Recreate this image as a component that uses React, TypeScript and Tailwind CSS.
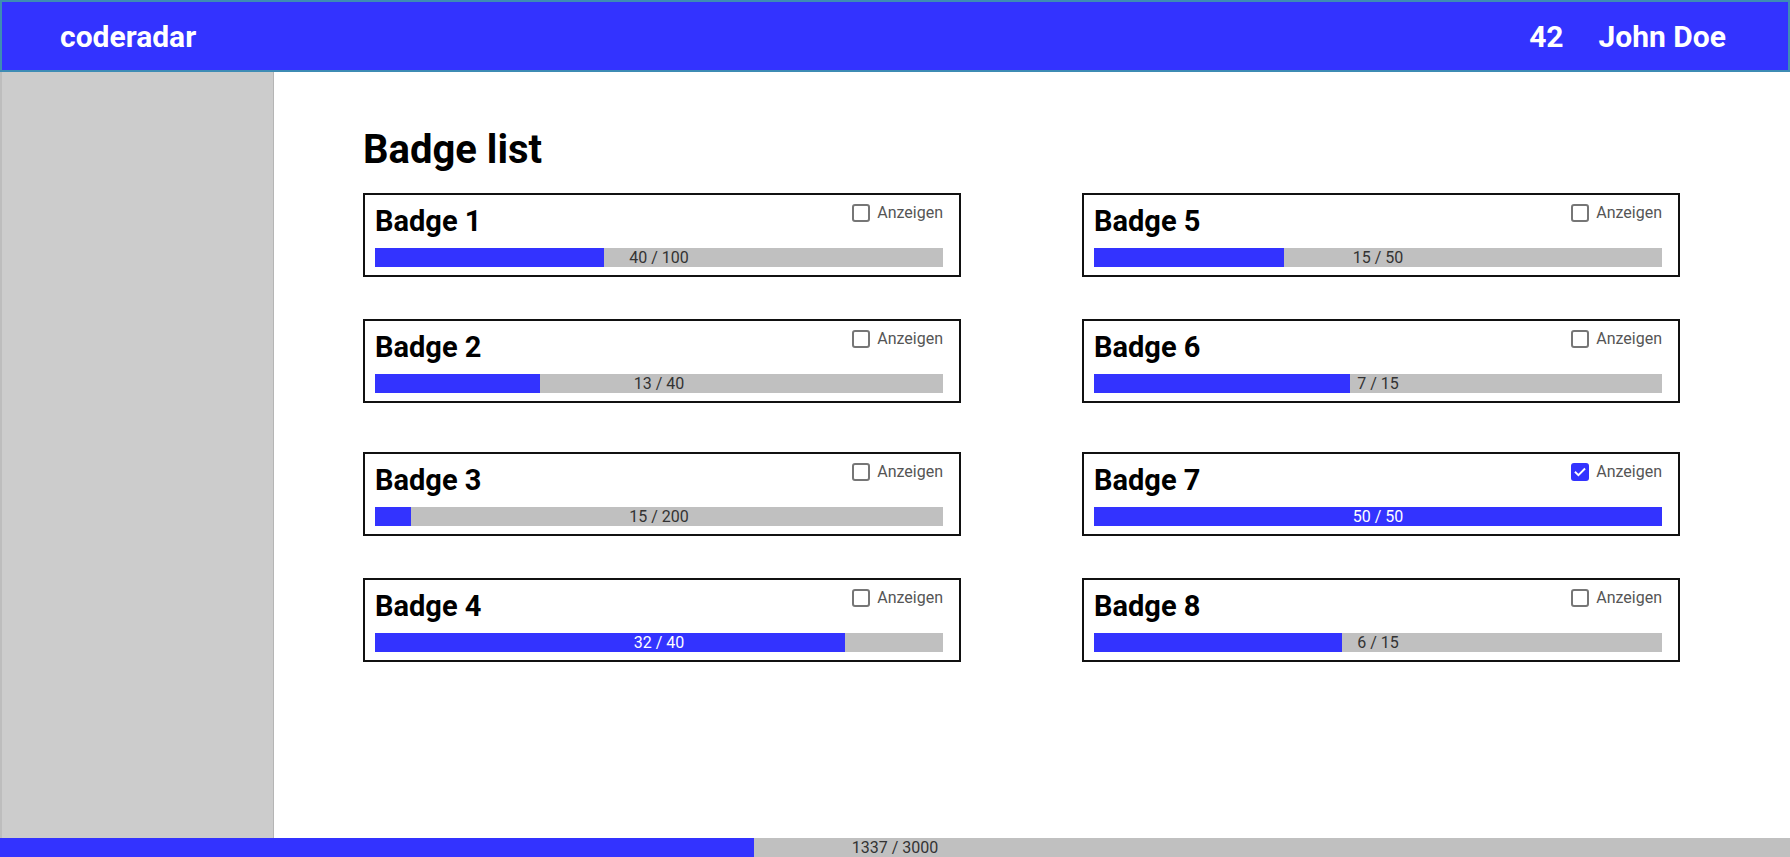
import React from "react";

type Badge = {
  name: string;
  current: number;
  total: number;
  fill: number; // share of the bar drawn in blue
  shown: boolean;
  extraTop?: boolean;
};

const left: Badge[] = [
  { name: "Badge 1", current: 40, total: 100, fill: 40.4, shown: false },
  { name: "Badge 2", current: 13, total: 40, fill: 29, shown: false },
  { name: "Badge 3", current: 15, total: 200, fill: 6.3, shown: false, extraTop: true },
  { name: "Badge 4", current: 32, total: 40, fill: 82.7, shown: false },
];

const right: Badge[] = [
  { name: "Badge 5", current: 15, total: 50, fill: 33.4, shown: false },
  { name: "Badge 6", current: 7, total: 15, fill: 45, shown: false },
  { name: "Badge 7", current: 50, total: 50, fill: 100, shown: true, extraTop: true },
  { name: "Badge 8", current: 6, total: 15, fill: 43.6, shown: false },
];

function Checkbox({ checked }: { checked: boolean }) {
  if (checked) {
    return (
      <span className="w-[18px] h-[18px] rounded-[3px] bg-[#3333ff] flex items-center justify-center">
        <svg width="14" height="14" viewBox="0 0 16 16" fill="none">
          <path d="M3 8.5l3.2 3.2L13 4.8" stroke="white" strokeWidth="2.2" strokeLinecap="square" />
        </svg>
      </span>
    );
  }
  return <span className="w-[18px] h-[18px] rounded-[3px] border-2 border-[#767676] bg-white" />;
}

function ProgressBar({ fill, label, light }: { fill: number; label: string; light: boolean }) {
  return (
    <div className="relative h-[19px] bg-[#c0c0c0]">
      <div className="h-full bg-[#3333ff]" style={{ width: `${fill}%` }} />
      <span
        className={`absolute inset-0 flex items-center justify-center text-[16px] leading-none ${
          light ? "text-white" : "text-[#333]"
        }`}
      >
        {label}
      </span>
    </div>
  );
}

function BadgeCard({ badge }: { badge: Badge }) {
  const light = badge.fill > 60;
  return (
    <div
      className={`border-2 border-[#111] bg-white pt-[9px] pl-[10px] pr-[16px] pb-[8px] ${
        badge.extraTop ? "mt-[7px]" : ""
      }`}
    >
      <div className="flex items-start justify-between">
        <h2 className="text-[29px] leading-[34px] font-bold text-black">{badge.name}</h2>
        <label className="flex items-center gap-[7px] text-[16px] leading-[18px] text-[#555]">
          <Checkbox checked={badge.shown} />
          Anzeigen
        </label>
      </div>
      <div className="mt-[10px]">
        <ProgressBar fill={badge.fill} label={`${badge.current} / ${badge.total}`} light={light} />
      </div>
    </div>
  );
}

export default function App() {
  return (
    <div
      className="h-screen w-full flex flex-col bg-white overflow-hidden"
      style={{ fontFamily: "Roboto, 'Liberation Sans', sans-serif" }}
    >
      <header className="h-[72px] shrink-0 bg-[#3333ff] border-2 border-[#3e8cb4] flex items-center justify-between pl-[58px] pr-[62px] text-white">
        <span className="text-[30px] font-bold">coderadar</span>
        <div className="flex items-center gap-[35px] text-[30px] font-bold">
          <span>42</span>
          <span>John Doe</span>
        </div>
      </header>

      <div className="flex flex-1 min-h-0">
        <aside className="w-[274px] shrink-0 bg-[#cccccc] border-l-2 border-l-[#bdbdbd] border-r border-r-[#b5b5b5]" />
        <main className="flex-1 pl-[89px] pr-[110px]">
          <h1 className="mt-[54px] text-[40px] leading-[47px] font-bold text-black">Badge list</h1>
          <div className="mt-[20px] grid grid-cols-[598px_598px] gap-x-[121px]">
            <div className="flex flex-col gap-[42px]">
              {left.map((b) => (
                <BadgeCard key={b.name} badge={b} />
              ))}
            </div>
            <div className="flex flex-col gap-[42px]">
              {right.map((b) => (
                <BadgeCard key={b.name} badge={b} />
              ))}
            </div>
          </div>
        </main>
      </div>

      <div className="relative h-[19px] shrink-0 bg-[#c0c0c0]">
        <div className="h-full w-[754px] bg-[#3333ff]" />
        <span className="absolute inset-0 flex items-center justify-center text-[16px] leading-none text-[#333]">
          1337 / 3000
        </span>
      </div>
    </div>
  );
}
